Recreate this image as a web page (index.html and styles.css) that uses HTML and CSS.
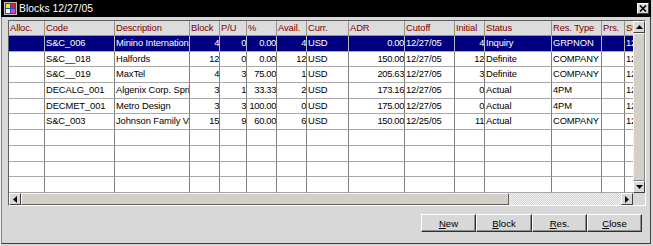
FILE: index.html
```html
<!DOCTYPE html>
<html lang="en">
<head>
    <meta charset="UTF-8">
    <link rel="stylesheet" href="styles.css">
</head>
<body>
    <div class="window">
        <div class="titlebar">
            <svg class="ticon" width="13" height="13" viewBox="0 0 13 13">
                <rect x="0.5" y="0.5" width="12" height="12" fill="#2050c0" stroke="#c0c0c0"/>
                <rect x="2" y="2" width="4" height="4" fill="#ffe020"/>
                <rect x="7" y="2" width="4" height="4" fill="#e02020"/>
                <rect x="2" y="7" width="4" height="4" fill="#ffffff"/>
                <rect x="7" y="7" width="4" height="4" fill="#e040c0"/>
            </svg>
            <span class="title">Blocks 12/27/05</span>
            <span class="xbtn">
                <svg width="8" height="7" viewBox="0 0 8 7"><path d="M1 0.5 L7 6.5 M7 0.5 L1 6.5" stroke="#000" stroke-width="1.6"/></svg>
            </span>
        </div>
        <div class="client">
            <div class="panel">
                <div class="grid">
                    <div class="row head">
                        <div class="c">Alloc.</div><div class="c">Code</div><div class="c">Description</div><div class="c">Block</div><div class="c">P/U</div><div class="c">%</div><div class="c">Avail.</div><div class="c">Curr.</div><div class="c">ADR</div><div class="c">Cutoff</div><div class="c">Initial</div><div class="c">Status</div><div class="c">Res. Type</div><div class="c">Prs.</div><div class="c">Start</div>
                    </div>
                    <div class="row sel">
                        <div class="c"></div><div class="c">S&amp;C_006</div><div class="c">Minino International</div><div class="c num">4</div><div class="c num">0</div><div class="c num">0.00</div><div class="c num">4</div><div class="c">USD</div><div class="c num">0.00</div><div class="c">12/27/05</div><div class="c num">4</div><div class="c">Inquiry</div><div class="c">GRPNON</div><div class="c"></div><div class="c">12/27/05</div>
                    </div>
                    <div class="row">
                        <div class="c"></div><div class="c">S&amp;C__018</div><div class="c">Halfords</div><div class="c num">12</div><div class="c num">0</div><div class="c num">0.00</div><div class="c num">12</div><div class="c">USD</div><div class="c num">150.00</div><div class="c">12/27/05</div><div class="c num">12</div><div class="c">Definite</div><div class="c">COMPANY</div><div class="c"></div><div class="c">12/27/05</div>
                    </div>
                    <div class="row">
                        <div class="c"></div><div class="c">S&amp;C__019</div><div class="c">MaxTel</div><div class="c num">4</div><div class="c num">3</div><div class="c num">75.00</div><div class="c num">1</div><div class="c">USD</div><div class="c num">205.63</div><div class="c">12/27/05</div><div class="c num">3</div><div class="c">Definite</div><div class="c">COMPANY</div><div class="c"></div><div class="c">12/27/05</div>
                    </div>
                    <div class="row">
                        <div class="c"></div><div class="c">DECALG_001</div><div class="c">Algenix Corp. Springfield</div><div class="c num">3</div><div class="c num">1</div><div class="c num">33.33</div><div class="c num">2</div><div class="c">USD</div><div class="c num">173.16</div><div class="c">12/27/05</div><div class="c num">0</div><div class="c">Actual</div><div class="c">4PM</div><div class="c"></div><div class="c">12/27/05</div>
                    </div>
                    <div class="row">
                        <div class="c"></div><div class="c">DECMET_001</div><div class="c">Metro Design</div><div class="c num">3</div><div class="c num">3</div><div class="c num">100.00</div><div class="c num">0</div><div class="c">USD</div><div class="c num">175.00</div><div class="c">12/27/05</div><div class="c num">0</div><div class="c">Actual</div><div class="c">4PM</div><div class="c"></div><div class="c">12/27/05</div>
                    </div>
                    <div class="row">
                        <div class="c"></div><div class="c">S&amp;C_003</div><div class="c">Johnson Family Vacation</div><div class="c num">15</div><div class="c num">9</div><div class="c num">60.00</div><div class="c num">6</div><div class="c">USD</div><div class="c num">150.00</div><div class="c">12/25/05</div><div class="c num">11</div><div class="c">Actual</div><div class="c">COMPANY</div><div class="c"></div><div class="c">12/25/05</div>
                    </div>
                    <div class="row"><div class="c"></div><div class="c"></div><div class="c"></div><div class="c"></div><div class="c"></div><div class="c"></div><div class="c"></div><div class="c"></div><div class="c"></div><div class="c"></div><div class="c"></div><div class="c"></div><div class="c"></div><div class="c"></div><div class="c"></div></div>
                    <div class="row"><div class="c"></div><div class="c"></div><div class="c"></div><div class="c"></div><div class="c"></div><div class="c"></div><div class="c"></div><div class="c"></div><div class="c"></div><div class="c"></div><div class="c"></div><div class="c"></div><div class="c"></div><div class="c"></div><div class="c"></div></div>
                    <div class="row"><div class="c"></div><div class="c"></div><div class="c"></div><div class="c"></div><div class="c"></div><div class="c"></div><div class="c"></div><div class="c"></div><div class="c"></div><div class="c"></div><div class="c"></div><div class="c"></div><div class="c"></div><div class="c"></div><div class="c"></div></div>
                    <div class="row"><div class="c"></div><div class="c"></div><div class="c"></div><div class="c"></div><div class="c"></div><div class="c"></div><div class="c"></div><div class="c"></div><div class="c"></div><div class="c"></div><div class="c"></div><div class="c"></div><div class="c"></div><div class="c"></div><div class="c"></div></div>
                </div>
                <div class="vscroll">
                    <span class="arrow"><svg width="7" height="4" viewBox="0 0 7 4"><path d="M3.5 0 L7 4 L0 4 Z" fill="#000"/></svg></span>
                    <span class="vthumb"></span>
                    <span class="arrow"><svg width="7" height="4" viewBox="0 0 7 4"><path d="M0 0 L7 0 L3.5 4 Z" fill="#000"/></svg></span>
                </div>
                <div class="hscroll">
                    <span class="arrow"><svg width="4" height="7" viewBox="0 0 4 7"><path d="M0 3.5 L4 0 L4 7 Z" fill="#000"/></svg></span>
                    <span class="hthumb"></span>
                    <span class="track"></span>
                    <span class="arrow"><svg width="4" height="7" viewBox="0 0 4 7"><path d="M0 0 L4 3.5 L0 7 Z" fill="#000"/></svg></span>
                </div>
                <div class="corner"></div>
            </div>
            <div class="buttons">
                <button class="btn"><u>N</u>ew</button>
                <button class="btn wide"><u>B</u>lock</button>
                <button class="btn"><u>R</u>es.</button>
                <button class="btn"><u>C</u>lose</button>
            </div>
        </div>
    </div>
</body>
</html>
```

FILE: styles.css
```css
* {
    box-sizing: border-box;
}
body {
    margin: 0;
    background: #d8d8d8;
    font-family: "Liberation Sans", Arial, sans-serif;
    font-size: 9.4px;
}
.window {
    width: 653px;
    height: 246px;
    background: #d8d8d8;
    display: flex;
    flex-direction: column;
    border-left: 1px solid #f0f0f0;
}
.titlebar {
    height: 17px;
    margin-right: 2px;
    background: #000;
    color: #fff;
    display: flex;
    align-items: center;
    padding: 0 2px 0 3px;
    gap: 2px;
    font-size: 10.4px;
}
.title {
    flex: 1;
}
.xbtn {
    width: 12px;
    height: 11px;
    background: #d8d8d8;
    border: 1px solid;
    border-color: #fff #404040 #404040 #fff;
    display: flex;
    align-items: center;
    justify-content: center;
}
.client {
    flex: 1;
    padding: 3px 7px 0 6px;
    margin-right: 2px;
    margin-bottom: 2px;
    border-left: 1px solid #808080;
    border-right: 1px solid #404040;
    border-bottom: 1px solid #404040;
}
.panel {
    display: grid;
    grid-template-columns: 624px 12px;
    grid-template-rows: 172px 12px;
    width: 638px;
    border: 1px solid;
    border-color: #606060 #ffffff #ffffff #606060;
}
.grid {
    overflow: hidden;
    background: #fff;
}
.row {
    display: grid;
    grid-template-columns: 36px 70px 75px 30px 27px 30px 30px 42px 56px 50px 30px 67px 50px 23px 40px;
    width: 656px;
    height: 15.7px;
}
.c {
    border-right: 1px solid #808080;
    border-bottom: 1px solid #a8a8a8;
    padding: 0 1px 0 1px;
    white-space: nowrap;
    overflow: hidden;
    line-height: 14.7px;
    letter-spacing: -0.1px;
    color: #000;
}
.num {
    text-align: right;
    padding: 0;
    letter-spacing: -0.35px;
}
.head {
    height: 15px;
    background: #dcdcdc;
}
.head .c {
    color: #800000;
    line-height: 14px;
    border-right-color: #909090;
    border-bottom-color: #909090;
}
.sel {
    background: #000080;
}
.sel .c {
    color: #fff;
    border-right-color: #b8b8b8;
}
.vscroll {
    display: flex;
    flex-direction: column;
    background: #d8d8d8;
}
.hscroll {
    display: flex;
    background: #d8d8d8;
}
.arrow {
    width: 12px;
    height: 12px;
    flex: none;
    background: #d8d8d8;
    border: 1px solid;
    border-color: #fff #404040 #404040 #fff;
    display: flex;
    align-items: center;
    justify-content: center;
}
.vthumb {
    flex: 1;
    background: #d4d0c8;
    border: 1px solid;
    border-color: #f4f4f4 #808080 #808080 #f4f4f4;
}
.hthumb {
    width: 488px;
    background: #d4d0c8;
    border: 1px solid;
    border-color: #f4f4f4 #606060 #606060 #f4f4f4;
}
.track {
    flex: 1;
    background: repeating-conic-gradient(#d4d0c8 0 25%, #f6f6f4 0 50%) 0 0 / 2px 2px;
}
.corner {
    background: #d8d8d8;
}
.buttons {
    display: flex;
    justify-content: flex-end;
    margin-top: 8px;
    margin-right: 1px;
}
.btn {
    width: 55px;
    height: 18px;
    margin: 0;
    padding: 0;
    background: #d8d8d8;
    border: 1px solid;
    border-color: #fff #303030 #303030 #fff;
    box-shadow: inset -1px -1px #909090;
    font-family: "Liberation Sans", Arial, sans-serif;
    font-size: 9.6px;
    color: #000;
}
.wide {
    width: 56px;
}
```
